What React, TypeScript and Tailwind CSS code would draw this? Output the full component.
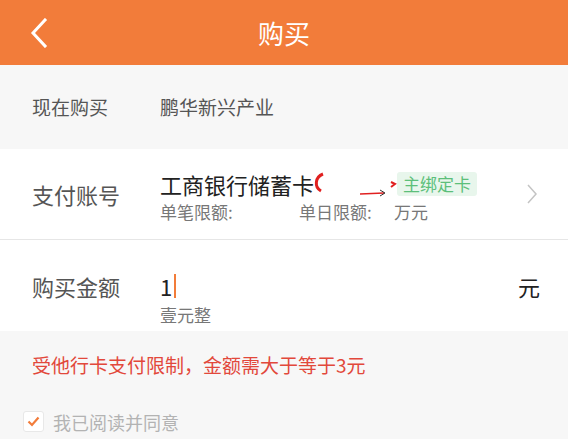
import React from "react";

export default function App() {
  return (
    <div
      className="w-[568px] h-[439px] overflow-hidden bg-[#f7f7f7] text-[#333]"
      style={{ fontFamily: '"Noto Sans CJK SC", "Noto Sans", sans-serif' }}
    >
      {/* Header */}
      <div className="h-[65px] bg-[#f27c3a] grid grid-cols-[1fr_auto_1fr] items-center">
        <div className="pl-[29px] flex items-center">
          <svg width="20" height="30" viewBox="0 0 20 30" fill="none">
            <path d="M16 2 L4 15 L16 28" stroke="#ffffff" strokeWidth="3" strokeLinecap="square" />
          </svg>
        </div>
        <div className="text-white text-[26px] leading-none">购买</div>
        <div />
      </div>

      {/* Product row */}
      <div className="h-[84px] flex items-center pl-[32px] text-[19px] text-[#555]">
        <span className="w-[128px]">现在购买</span>
        <span>鹏华新兴产业</span>
      </div>

      {/* Payment account */}
      <div className="h-[90px] bg-white flex items-center">
        <span className="w-[160px] pl-[32px] text-[22px] text-[#555]">支付账号</span>
        <div className="flex-1 flex flex-col gap-[6px] pt-[2px]">
          <div className="flex items-center h-[26px]">
            <span className="text-[22px] leading-none text-[#222]">工商银行储蓄卡</span>
            <svg width="83" height="26" viewBox="0 0 83 26" className="shrink-0">
              <path d="M9 3 C1 6 0 16 7 20" stroke="#e02020" strokeWidth="3" fill="none" />
              <path d="M46 23 L70 22" stroke="#e02020" strokeWidth="1.5" />
              <path d="M66 19 L71 22 L66 25" stroke="#333" strokeWidth="1" fill="none" />
              <path d="M77 11 L81 13 L77 16" stroke="#e02020" strokeWidth="2" fill="none" />
            </svg>
            <span className="h-[24px] px-[6px] flex items-center rounded-[3px] bg-[#e8f6ec] text-[#5cbf7a] text-[17px] leading-none">
              主绑定卡
            </span>
          </div>
          <div className="flex items-center text-[17px] leading-none text-[#777]">
            <span className="w-[139px]">单笔限额:</span>
            <span className="w-[95px]">单日限额:</span>
            <span>万元</span>
          </div>
        </div>
        <div className="pr-[30px] flex items-center">
          <svg width="12" height="20" viewBox="0 0 12 20" fill="none">
            <path d="M2 1 L10 10 L2 19" stroke="#c4c4c4" strokeWidth="1.5" />
          </svg>
        </div>
      </div>

      <div className="h-px bg-[#e6e6e6]" />

      {/* Amount */}
      <div className="h-[91px] bg-white flex items-center">
        <span className="w-[160px] pl-[32px] text-[22px] text-[#555] pt-[1px]">购买金额</span>
        <div className="flex-1 flex flex-col pt-[24px]">
          <div className="flex items-center h-[26px]">
            <span className="text-[22px] leading-none text-[#222]">1</span>
            <span className="w-[2px] h-[24px] bg-[#f27c3a] ml-[2px]" />
          </div>
          <span className="mt-[7px] text-[17px] leading-none text-[#777]">壹元整</span>
        </div>
        <span className="pr-[28px] text-[22px] text-[#222] pt-[1px]">元</span>
      </div>

      {/* Notice */}
      <div className="pt-[24px] pl-[32px] text-[19px] leading-none text-[#e2483b]">
        受他行卡支付限制，金额需大于等于3元
      </div>

      {/* Agreement */}
      <div className="mt-[37px] pl-[23px] flex items-center gap-[9px]">
        <div className="w-[21px] h-[21px] rounded-[3px] bg-white border border-[#e8e8e8] flex items-center justify-center">
          <svg width="13" height="11" viewBox="0 0 13 11" fill="none">
            <path d="M1.5 5.5 L5 9 L11.5 1.5" stroke="#f27c3a" strokeWidth="2.2" />
          </svg>
        </div>
        <span className="text-[18px] leading-none text-[#b3b3b3]">我已阅读并同意</span>
      </div>
    </div>
  );
}
